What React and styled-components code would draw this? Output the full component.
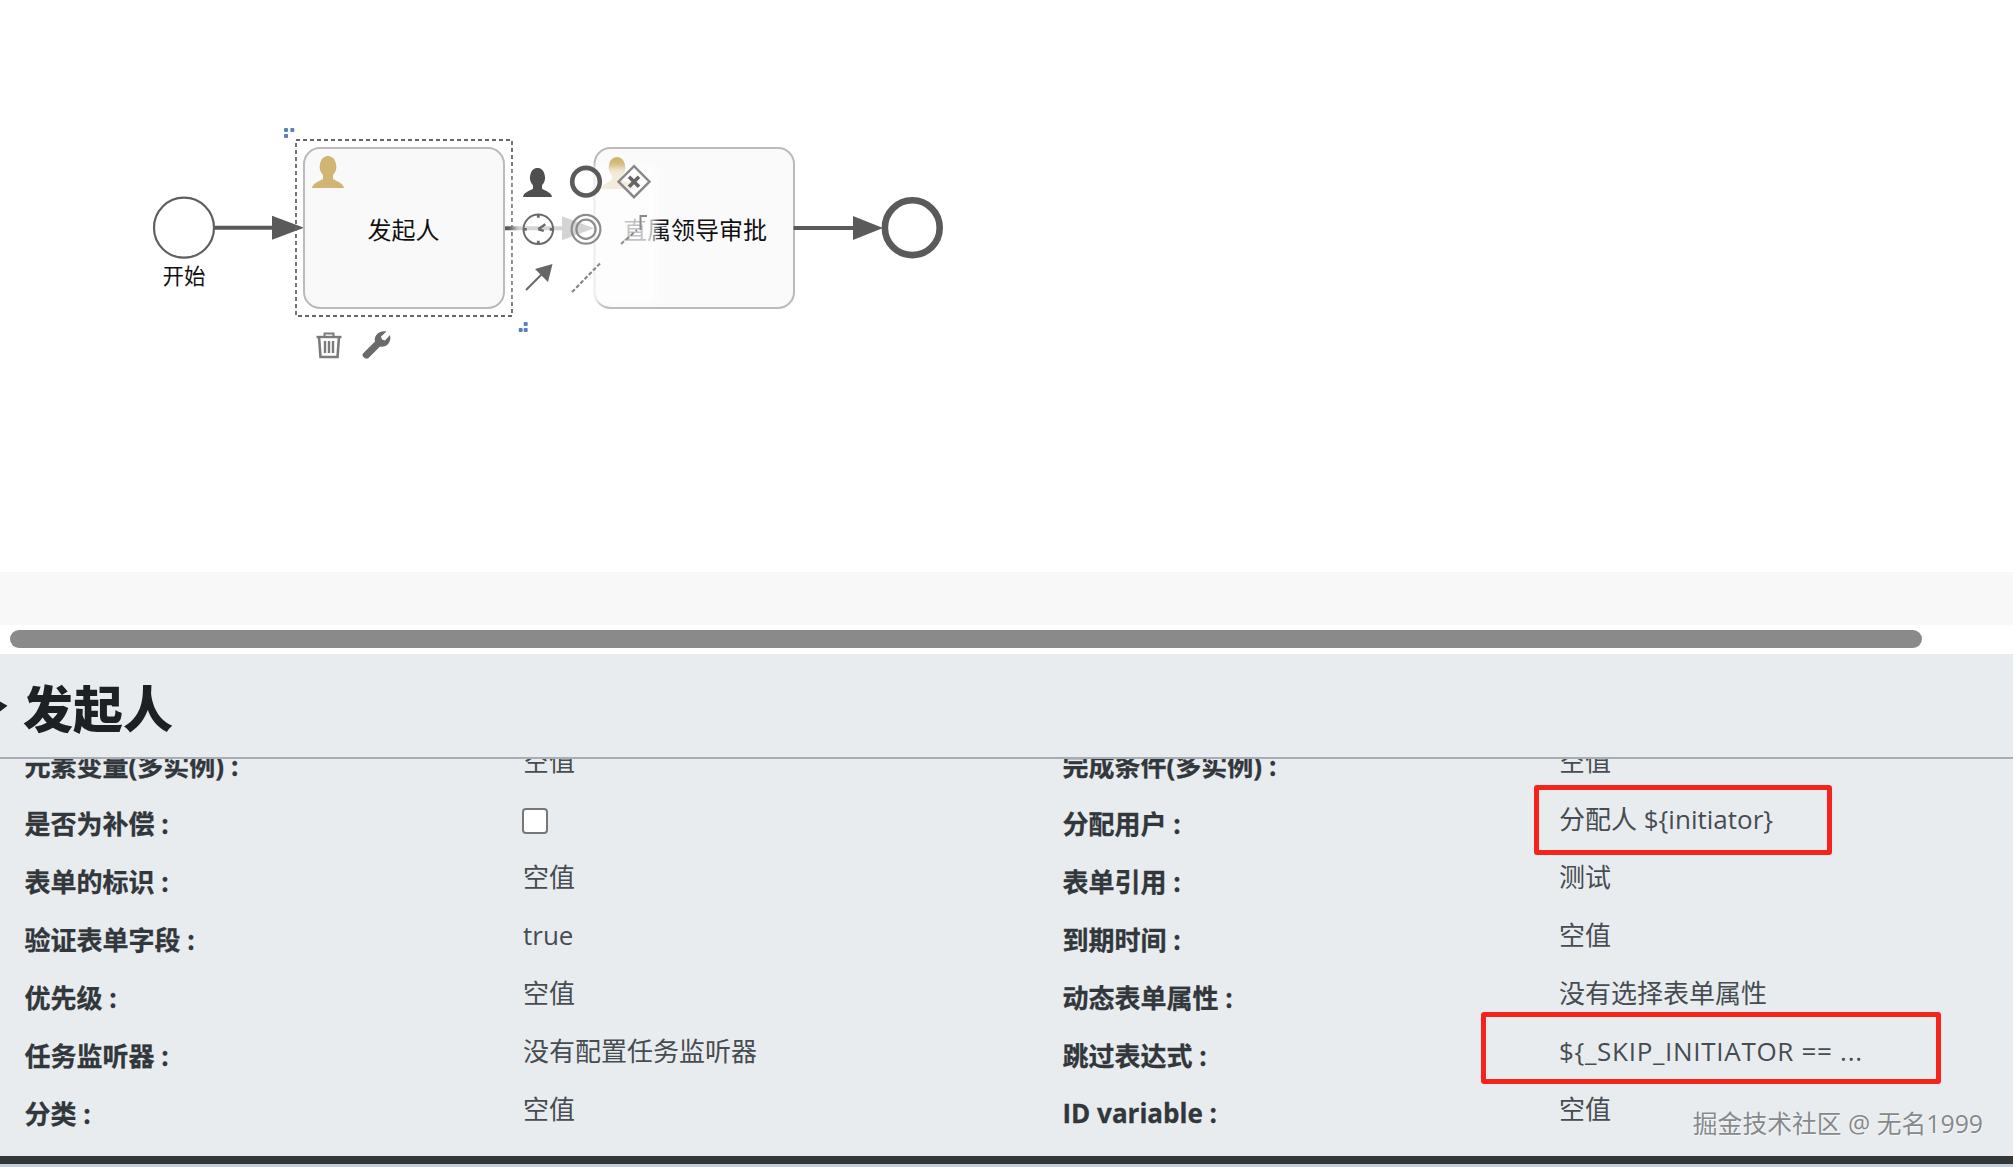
import React from 'react';
import styled, { createGlobalStyle } from 'styled-components';

const GlobalStyle = createGlobalStyle`
  html, body {
    margin: 0;
    padding: 0;
    background: #fff;
  }
  body {
    font-family: "Open Sans", "Noto Sans CJK SC", sans-serif;
    overflow: hidden;
  }
`;

const Page = styled.div`
  width: 2013px;
  height: 1167px;
  display: flex;
  flex-direction: column;
  overflow: hidden;
  background: #fff;
`;

const Canvas = styled.svg`
  display: block;
  width: 2013px;
  height: 572px;
  flex: none;
  font-family: "Noto Sans CJK SC", sans-serif;
`;

const ScrollArea = styled.div`
  flex: none;
  height: 82px;
  display: flex;
  flex-direction: column;
`;

const ScrollBand = styled.div`
  height: 53px;
  background: #f8f8f8;
`;

const ScrollTrack = styled.div`
  height: 29px;
  padding: 5px 91px 0 10px;
  box-sizing: border-box;
`;

const ScrollThumb = styled.div`
  height: 18px;
  border-radius: 9px;
  background: #8a8a8a;
`;

const Panel = styled.section`
  position: relative;
  flex: none;
  height: 502px;
  background: #e9ecef;
  display: flex;
  flex-direction: column;
  overflow: hidden;
`;

const Header = styled.header`
  flex: none;
  height: 105px;
  box-sizing: border-box;
  border-bottom: 2px solid #a9adb5;
  display: flex;
  align-items: center;
  gap: 13px;
  padding: 0;
`;

const Chevron = styled.svg`
  flex: none;
  width: 10px;
  height: 22px;
`;

const Title = styled.h1`
  margin: 0;
  font-size: 50px;
  line-height: 60px;
  font-weight: 900;
  color: #1e2124;
  font-family: "Noto Sans CJK SC", sans-serif;
`;

const Body = styled.div`
  flex: none;
  height: 395px;
  overflow: hidden;
  padding-left: 24.5px;
`;

const Grid = styled.div`
  margin-top: -23px;
  display: grid;
  grid-template-columns: 498.5px 539.5px 496.5px 1fr;
  grid-auto-rows: 58px;
  align-items: center;
`;

const Label = styled.div`
  font-size: 26px;
  font-weight: 700;
  color: #32373c;
  white-space: nowrap;
  -webkit-text-stroke: 0.3px #32373c;
`;

const Value = styled.div`
  position: relative;
  font-size: 26px;
  color: #464c52;
  white-space: nowrap;
  padding-bottom: 8px;
  height: 36px;
  line-height: 36px;
  letter-spacing: ${(p) => p.$spacing || 0}px;
`;

const Check = styled.input`
  appearance: none;
  display: block;
  margin: 7px 0 0 -1px;
  width: 26px;
  height: 26px;
  box-sizing: border-box;
  background: #fff;
  border: 2px solid #777;
  border-radius: 4px;
`;

const Highlight = styled.span`
  position: absolute;
  left: ${(p) => p.$left}px;
  top: ${(p) => p.$top}px;
  width: ${(p) => p.$width}px;
  height: ${(p) => p.$height}px;
  box-sizing: border-box;
  border: 5px solid #f4231c;
  border-radius: 3px;
`;

const Watermark = styled.div`
  position: absolute;
  right: 30px;
  top: 452px;
  font-size: 24.8px;
  line-height: 34px;
  color: #85898c;
  white-space: nowrap;
  text-shadow: 0 0 1px #fff, 1px 1px 0 #f4f5f6;
`;

const Footer = styled.div`
  flex: none;
  height: 8px;
  background: #34373a;
`;

const FooterEdge = styled.div`
  flex: none;
  height: 3px;
  background: #c6cdd7;
`;

const rows = [
  ['元素变量(多实例) :', '空值', '完成条件(多实例) :', '空值'],
  ['是否为补偿 :', 'check', '分配用户 :', '分配人 ${initiator}', { left: -25.4, top: -16, width: 298, height: 70 }],
  ['表单的标识 :', '空值', '表单引用 :', '测试'],
  ['验证表单字段 :', 'true', '到期时间 :', '空值'],
  ['优先级 :', '空值', '动态表单属性 :', '没有选择表单属性'],
  ['任务监听器 :', '没有配置任务监听器', '跳过表达式 :', '${_SKIP_INITIATOR == ...', { left: -78, top: -21, width: 460, height: 72, spacing: 0.7 }],
  ['分类 :', '空值', 'ID variable :', '空值'],
];

const PERSON = 'M0 32C1 27 6 26 11 23L11 19C8 16 7 12 8 8C9 2 13 0 16 0C19 0 23 2 24 8C25 12 24 16 21 19L21 23C26 26 31 27 32 32Z';

const Person = ({ x, y, fill, size = 32 }) => (
  <path d={PERSON} fill={fill} transform={`translate(${x} ${y}) scale(${size / 32})`} />
);

const Arrow = ({ x1, x2, y, head, tip, color }) => (
  <g>
    <line x1={x1} x2={x2} y1={y} y2={y} stroke={color} strokeWidth="4" />
    <polygon points={`${head},${y - 12} ${tip},${y} ${head},${y + 12}`} fill={color} />
  </g>
);

const Dots = ({ points }) => (
  <g fill="#5a80bd">
    {points.map(([x, y]) => (
      <rect key={`${x}-${y}`} x={x - 2} y={y - 2} width="4" height="4" rx="1" />
    ))}
  </g>
);

const Diagram = () => (
  <Canvas viewBox="0 0 2013 572">
    <defs>
      <filter id="soft" x="-10%" y="-10%" width="120%" height="120%">
        <feGaussianBlur stdDeviation="3" />
      </filter>
    </defs>

    <circle cx="184" cy="227.7" r="30" fill="#fff" stroke="#5f5f5f" strokeWidth="2.2" />
    <text x="184" y="284" fontSize="21.5" textAnchor="middle" fill="#111">开始</text>
    <Arrow x1={215} x2={280} y={227.7} head={272} tip={304} color="#5a5a5a" />

    <rect x="594.5" y="148" width="199.5" height="160" rx="16" fill="#fafafa" stroke="#bbb" strokeWidth="2" />
    <Person x={601} y={157} fill="#d1b574" />
    <text x="695" y="238.5" fontSize="24" textAnchor="middle" fill="#111">直属领导审批</text>

    <Arrow x1={504} x2={570} y={228.3} head={562} tip={594} color="#5a5a5a" />

    <rect x="304" y="148" width="200" height="160" rx="16" fill="#f9f9f9" stroke="#bbb" strokeWidth="2" />
    <Person x={312} y={156} fill="#d1b574" />
    <text x="403.5" y="239" fontSize="24" textAnchor="middle" fill="#111">发起人</text>

    <rect x="296" y="140" width="216" height="176" fill="none" stroke="#666" strokeWidth="1.8" strokeDasharray="4 3" />
    <Dots points={[[286, 130], [292.3, 130], [286, 136]]} />
    <Dots points={[[525.7, 324], [520.7, 330], [525.7, 330]]} />

    <g fill="none" stroke="#7b7b7b" strokeWidth="2" transform="translate(316 332)">
      <path d="M0.5 5H25.5" strokeWidth="2.4" />
      <path d="M8.5 5V1.5H17.5V5" />
      <path d="M3 5L4.5 25H21.5L23 5" strokeWidth="2.6" />
      <path d="M9 9V21M13 9V21M17 9V21" strokeWidth="2.4" />
    </g>
    <path
      d="M0.5 22.5L12.5 10.5C11 5.5 16 -1 24 .5L18.5 5.5L19.5 8.5L22.5 9.5L27.5 4C29.5 12 23 17 17.5 15.5L6 27C3 29 -1.5 25 .5 22.5Z"
      fill="#6a6a6a"
      transform="translate(362.5 331)"
    />

    <rect x="514" y="167" width="142" height="136" fill="#fff" opacity="0.74" filter="url(#soft)" />

    <Person x={523} y={168} fill="#4f4f4f" size={29} />
    <circle cx="586" cy="181.7" r="13.8" fill="none" stroke="#5a5a5a" strokeWidth="4.6" />
    <g transform="translate(634 181.7)">
      <polygon points="0,-15.5 15.5,0 0,15.5 -15.5,0" fill="none" stroke="#888" strokeWidth="2.4" />
      <path d="M-5 -5L5 5M5 -5L-5 5" stroke="#666" strokeWidth="3.6" />
    </g>

    <g transform="translate(538.3 229.3)" fill="none" stroke="#6a6a6a">
      <circle r="14.8" strokeWidth="2" />
      <path d="M0 -15V-11.5M0 15V11.5M-15 0H-11.5M15 0H11.5" strokeWidth="2.8" />
      <path d="M0 0L7 -5M0 0L5.5 1.5" strokeWidth="2.4" />
    </g>
    <g fill="none" stroke="#8c8c8c">
      <circle cx="586" cy="229.3" r="14.4" strokeWidth="2.2" />
      <circle cx="586" cy="229.3" r="9.6" strokeWidth="2.2" />
    </g>
    <g fill="none" stroke="#8a8a8a" strokeWidth="2">
      <path d="M647 216H640.5V230" />
      <path d="M621 244L637 230" strokeDasharray="4 2.5" />
    </g>

    <g stroke="#666" fill="#666">
      <line x1="526" y1="290" x2="543" y2="273" strokeWidth="2" />
      <polygon points="552.5,264 548,282 535,269" stroke="none" />
    </g>
    <line x1="572" y1="292" x2="600" y2="263.5" stroke="#888" strokeWidth="2.2" strokeDasharray="4 2" />

    <Arrow x1={793.5} x2={860} y={228} head={853} tip={883} color="#5a5a5a" />
    <circle cx="912.3" cy="227.7" r="27.4" fill="#fff" stroke="#5a5a5a" strokeWidth="6.6" />
  </Canvas>
);

const Cell = ({ text, box }) => (
  <Value $spacing={box && box.spacing}>
    {text === 'check' ? <Check type="checkbox" readOnly /> : text}
    {box && <Highlight $left={box.left} $top={box.top} $width={box.width} $height={box.height} />}
  </Value>
);

const App = () => (
  <Page>
    <GlobalStyle />
    <Diagram />
    <ScrollArea>
      <ScrollBand />
      <ScrollTrack>
        <ScrollThumb />
      </ScrollTrack>
    </ScrollArea>
    <Panel>
      <Header>
        <Chevron viewBox="0 0 10 22">
          <path d="M-6 6L3 11L-6 18" fill="none" stroke="#1e2124" strokeWidth="5" />
        </Chevron>
        <Title>发起人</Title>
      </Header>
      <Body>
        <Grid>
          {rows.map(([l1, v1, l2, v2, box]) => (
            <React.Fragment key={l1}>
              <Label>{l1}</Label>
              <Cell text={v1} />
              <Label>{l2}</Label>
              <Cell text={v2} box={box} />
            </React.Fragment>
          ))}
        </Grid>
      </Body>
      <Watermark>掘金技术社区 @ 无名1999</Watermark>
    </Panel>
    <Footer />
    <FooterEdge />
  </Page>
);

export default App;
